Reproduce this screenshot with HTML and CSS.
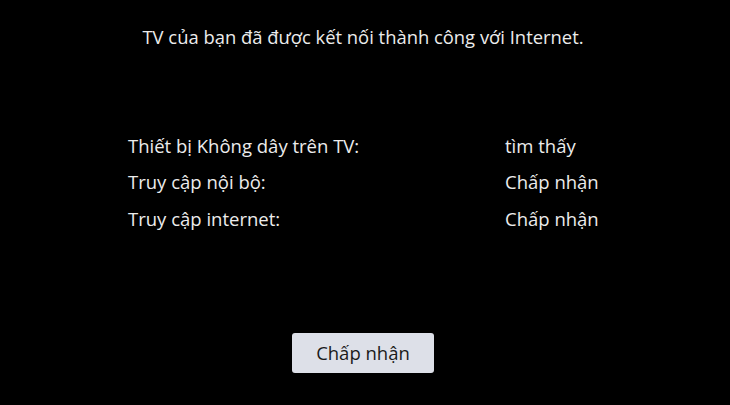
FILE: index.html
```html
<!DOCTYPE html>
<html lang="vi">
<head>
<meta charset="utf-8">
<link rel="stylesheet" href="styles.css">
</head>
<body>
<div class="screen">
  <h1 class="title">TV của bạn đã được kết nối thành công với Internet.</h1>
  <div class="rows">
    <div class="row"><span class="label">Thiết bị Không dây trên TV:</span><span class="value">tìm thấy</span></div>
    <div class="row"><span class="label">Truy cập nội bộ:</span><span class="value">Chấp nhận</span></div>
    <div class="row"><span class="label">Truy cập internet:</span><span class="value">Chấp nhận</span></div>
  </div>
  <div class="actions"><button class="btn">Chấp nhận</button></div>
</div>
</body>
</html>
```
FILE: styles.css
```css
html, body { margin: 0; padding: 0; background: #000; }
.screen {
  width: 730px; height: 405px; background: #000; color: #ececec;
  font-family: "Open Sans", "Noto Sans", sans-serif;
  display: flex; flex-direction: column; box-sizing: border-box;
  padding-top: 24px;
}
.title {
  margin: 0; font-weight: 400; font-size: 18.4px; line-height: 26px;
  text-align: center; padding-right: 4px;
}
.rows { margin-top: 77px; padding-left: 128px; display: flex; flex-direction: column; }
.row { display: flex; height: 36.5px; align-items: center; font-size: 18.5px; }
.label { width: 377px; }
.actions { margin-top: 96px; display: flex; justify-content: center; }
.btn {
  width: 142px; height: 40px; border: none; border-radius: 3px;
  background: #dde0e8; color: #1a1a1a;
  font-family: "Open Sans", "Noto Sans", sans-serif; font-size: 18.5px;
  margin-right: 4px; padding: 0;
}
```
